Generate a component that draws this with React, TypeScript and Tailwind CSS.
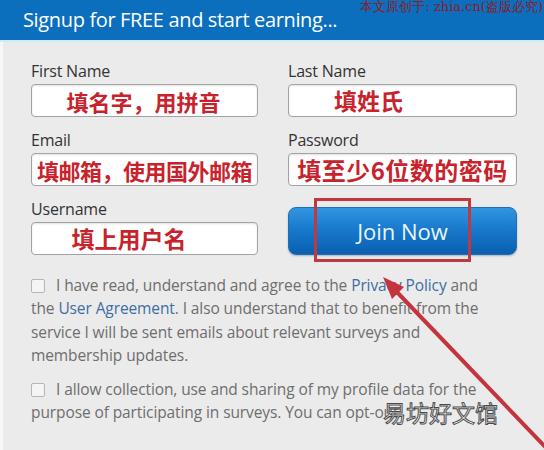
import React from 'react';

const cjk = "font-['Noto_Sans_CJK_SC',sans-serif] font-bold text-[#c8232c]";

const Field = ({ label, children }: { label: string; children: React.ReactNode }) => (
  <div className="flex flex-col">
    <label className="h-[20px] text-[16px] leading-[20px] tracking-[-0.2px] text-[#333]">{label}</label>
    <div className="mt-[3px] flex h-[33px] items-center justify-center overflow-hidden rounded-[4px] border border-[#a3a3a3] bg-white shadow-[inset_0_1px_2px_rgba(0,0,0,0.12)]">
      {children}
    </div>
  </div>
);

const Box = () => (
  <span className="mr-[11px] inline-block h-[14px] w-[14px] translate-y-[2px] rounded-[2px] border border-[#b5b5b5] bg-[#f4f4f4]" />
);

const Link = ({ children }: { children: React.ReactNode }) => <span className="text-[#3f6d9f]">{children}</span>;

export default function App() {
  return (
    <div className="relative flex h-[450px] w-[544px] flex-col overflow-hidden bg-[#ebebeb] font-['Open_Sans',sans-serif]">
      {/* header */}
      <div className="flex h-[40px] shrink-0 items-center bg-[#0b6fbe] pl-[23px]">
        <h1 className="text-[20px] leading-none tracking-[-0.35px] text-white">Signup for FREE and start earning...</h1>
      </div>
      <div className="h-[2px] shrink-0 bg-[#cdeaf6]" />

      <div className="flex-1 border-l-[3px] border-[#f7f7f7] pl-[28px] pt-[19px]">
        <div className="grid grid-cols-[227px_229px] gap-x-[30px] gap-y-[13px]">
          <Field label="First Name">
            <span className={`${cjk} ml-[-2px] text-[22px] leading-none`}>填名字，用拼音</span>
          </Field>
          <Field label="Last Name">
            <span className={`${cjk} ml-[-68px] text-[23px] leading-none`}>填姓氏</span>
          </Field>
          <Field label="Email">
            <span className={`${cjk} text-[22px] leading-none tracking-[-0.5px]`}>填邮箱，使用国外邮箱</span>
          </Field>
          <Field label="Password">
            <span className={`${cjk} whitespace-nowrap text-[24px] leading-[28px] tracking-[0.5px]`}>填至少6位数的密码</span>
          </Field>
          <Field label="Username">
            <span className={`${cjk} ml-[-31px] text-[23px] leading-none`}>填上用户名</span>
          </Field>
          <div className="relative self-end">
            <button className="flex h-[48px] w-full items-center justify-center rounded-[8px] border border-[#1c6fb8] bg-gradient-to-b from-[#3195e0] via-[#1677cc] to-[#0c5fae] text-[22px] text-[#eaf6ff] shadow-[0_1px_2px_rgba(0,0,0,0.25)]">
              Join Now
            </button>
            <div className="pointer-events-none absolute left-[26px] top-[-9px] h-[64px] w-[157px] border-[3px] border-[#c2383f]" />
          </div>
        </div>

        <div className="mt-[19px] w-[500px] whitespace-nowrap text-[15.5px] leading-[23.3px] tracking-[-0.1px] text-[#6e6e6e]">
          <p>
            <Box />I have read, understand and agree to the <Link>Privacy Policy</Link> and
            <br />
            the <Link>User Agreement</Link>. I also understand that to benefit from the
            <br />
            service I will be sent emails about relevant surveys and
            <br />
            membership updates.
          </p>
          <p className="mt-[11px]">
            <Box />I allow collection, use and sharing of my profile data for the
            <br />
            purpose of participating in surveys. You can opt-out
          </p>
        </div>
      </div>

      {/* watermarks */}
      <div className="absolute right-[1px] top-0 font-['DejaVu_Serif',serif] text-[13px] leading-[13px] text-[#8e1b25]">
        本文原创于: zhia.cn(盗版必究)
      </div>
      <div className="absolute left-[383px] top-[396px] font-['Noto_Sans_CJK_SC',sans-serif] text-[23px] leading-[32px] text-white [-webkit-text-stroke:1px_#4a4a4a]">
        易坊好文馆
      </div>

      {/* annotation arrow */}
      <svg className="pointer-events-none absolute left-0 top-0" width="544" height="450" viewBox="0 0 544 450">
        <line x1="395" y1="290" x2="550" y2="452" stroke="#c3343c" strokeWidth="4" />
        <polygon points="383,277 392,299 404,287" fill="#c3343c" />
      </svg>
    </div>
  );
}
